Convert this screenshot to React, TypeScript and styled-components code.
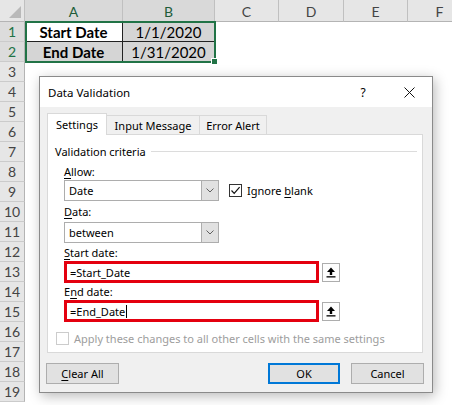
import React from 'react';
import styled, { createGlobalStyle, css } from 'styled-components';

const GlobalStyle = createGlobalStyle`
  html, body {
    margin: 0;
    padding: 0;
    background: #fff;
    overflow: hidden;
  }
`;

const COLUMNS = [
  { name: 'A', width: 98, selected: true },
  { name: 'B', width: 92, selected: true },
  { name: 'C', width: 64 },
  { name: 'D', width: 65 },
  { name: 'E', width: 64 },
  { name: 'F', width: 64 },
];

const ROW_COUNT = 19;

interface CellData {
  text: string;
  bold?: boolean;
  shaded?: boolean;
}

const DATA: Record<string, CellData> = {
  A1: { text: 'Start Date', bold: true },
  B1: { text: '1/1/2020', shaded: true },
  A2: { text: 'End Date', bold: true, shaded: true },
  B2: { text: '1/31/2020', shaded: true },
};

const Screen = styled.div`
  position: relative;
  width: 452px;
  height: 405px;
  overflow: hidden;
  background: #fff;
`;

/* ---------- spreadsheet ---------- */

const Sheet = styled.div`
  display: grid;
  grid-template-columns: 25px ${COLUMNS.map((c) => `${c.width}px`).join(' ')};
  grid-template-rows: 22px repeat(${ROW_COUNT}, 20px);
  font-family: Lato, 'Liberation Sans', sans-serif;
`;

const Corner = styled.div`
  grid-area: 1 / 1;
  position: relative;
  background: #e6e6e6;
  border-right: 1px solid #c0c0c0;
  border-bottom: 1px solid #b4b4b4;
  box-sizing: border-box;

  &::after {
    content: '';
    position: absolute;
    right: 3px;
    bottom: 3px;
    border-style: solid;
    border-width: 0 0 12px 12px;
    border-color: transparent transparent #b9b9b9 transparent;
  }
`;

const ColHeader = styled.div<{ $col: number; $selected?: boolean }>`
  grid-area: 1 / ${(p) => p.$col + 2};
  display: flex;
  align-items: center;
  justify-content: center;
  box-sizing: border-box;
  padding-top: 1px;
  font-size: 14px;
  color: ${(p) => (p.$selected ? '#215c3a' : '#444')};
  background: ${(p) => (p.$selected ? '#d9d9d9' : '#e6e6e6')};
  border-right: 1px solid #c0c0c0;
  border-bottom: 1px solid #b4b4b4;
`;

const RowHeader = styled.div<{ $row: number; $selected?: boolean }>`
  grid-area: ${(p) => p.$row + 1} / 1;
  display: flex;
  align-items: center;
  justify-content: center;
  box-sizing: border-box;
  font-size: 14px;
  color: ${(p) => (p.$selected ? '#217346' : '#444')};
  background: ${(p) => (p.$selected ? '#dcdcdc' : '#e6e6e6')};
  border-right: 1px solid #b4b4b4;
  border-bottom: 1px solid #cbcbcb;
`;

const Cell = styled.div<{ $row: number; $col: number; $bold?: boolean; $shaded?: boolean; $filled?: boolean }>`
  grid-area: ${(p) => p.$row + 1} / ${(p) => p.$col + 2};
  display: flex;
  align-items: center;
  justify-content: center;
  box-sizing: border-box;
  font-size: 15px;
  color: #000;
  font-weight: ${(p) => (p.$bold ? 700 : 400)};
  background: ${(p) => (p.$shaded ? '#d5d5d5' : '#fff')};
  ${(p) =>
    p.$filled &&
    css`
      border-right: 1px solid #222;
      border-bottom: 1px solid #222;
    `}
`;

const Selection = styled.div`
  grid-area: 2 / 2 / 4 / 4;
  position: relative;
  z-index: 1;
  margin: -1px -1px -1px 0;
  border: 2px solid #217346;
  pointer-events: none;
`;

const FillHandle = styled.div`
  position: absolute;
  right: -4px;
  bottom: -4px;
  width: 5px;
  height: 5px;
  background: #217346;
  border: 1px solid #fff;
`;

/* ---------- dialog ---------- */

const Dialog = styled.div`
  position: absolute;
  left: 39px;
  top: 76px;
  width: 394px;
  height: 317px;
  box-sizing: border-box;
  display: flex;
  flex-direction: column;
  border: 1px solid #8a8a8a;
  background: #f0f0f0;
  box-shadow: 2px 3px 12px rgba(0, 0, 0, 0.28);
  z-index: 2;
  font-family: 'Noto Sans', 'Open Sans', sans-serif;
  font-size: 11px;
  color: #000;
`;

const TitleBar = styled.div`
  height: 30px;
  flex: none;
  display: flex;
  align-items: center;
  justify-content: space-between;
  background: #fff;
`;

const Title = styled.span`
  padding-left: 8px;
  font-size: 11.5px;
`;

const TitleButtons = styled.div`
  display: flex;
  height: 100%;
`;

const TitleButton = styled.div`
  width: 46px;
  height: 100%;
  display: flex;
  align-items: center;
  justify-content: center;
  font-size: 12px;
`;

const Body = styled.div`
  flex: 1;
  display: flex;
  flex-direction: column;
  padding: 6px 9px 0 7px;
`;

const TabStrip = styled.div`
  display: flex;
  align-items: flex-end;
  height: 21px;
  position: relative;
  z-index: 1;
`;

const Tab = styled.div<{ $active?: boolean; $width: number }>`
  box-sizing: border-box;
  width: ${(p) => p.$width}px;
  display: flex;
  align-items: center;
  justify-content: center;
  border: 1px solid #d9d9d9;
  border-bottom: none;
  ${(p) =>
    p.$active
      ? css`
          height: 22px;
          margin-bottom: -1px;
          background: #fff;
          padding-bottom: 1px;
        `
      : css`
          height: 19px;
          background: #f0f0f0;
          margin-left: -1px;
        `}
`;

const Panel = styled.div`
  height: 219px;
  box-sizing: border-box;
  background: #fff;
  border: 1px solid #d9d9d9;
  padding: 8px 5px 0 7px;
  display: flex;
  flex-direction: column;
`;

const GroupHeader = styled.div`
  display: flex;
  align-items: center;
  gap: 5px;
  height: 16px;
`;

const GroupRule = styled.div`
  flex: 1;
  height: 1px;
  background: #dcdcdc;
`;

const Criteria = styled.div`
  display: flex;
  flex-direction: column;
  padding-left: 9px;
  margin-top: 5px;
`;

const FieldLabel = styled.div<{ $top?: number }>`
  height: 16px;
  line-height: 16px;
  margin-top: ${(p) => p.$top ?? 0}px;
`;

const FieldRow = styled.div<{ $top?: number }>`
  display: flex;
  align-items: center;
  margin-top: ${(p) => p.$top ?? 0}px;
`;

const SelectBox = styled.div`
  width: 155px;
  height: 21px;
  box-sizing: border-box;
  display: flex;
  align-items: stretch;
  border: 1px solid #adadad;
  background: #fff;
`;

const SelectValue = styled.span`
  flex: 1;
  display: flex;
  align-items: center;
  padding-left: 4px;
`;

const SelectButton = styled.span`
  width: 16px;
  display: flex;
  align-items: center;
  justify-content: center;
  background: #e1e1e1;
  border-left: 1px solid #adadad;
`;

const CheckLabel = styled.label<{ $disabled?: boolean; $indent?: number }>`
  display: flex;
  align-items: center;
  gap: 5px;
  margin-left: ${(p) => p.$indent ?? 0}px;
  color: ${(p) => (p.$disabled ? '#9d9d9d' : '#000')};
`;

const CheckBoxFrame = styled.span<{ $disabled?: boolean }>`
  width: 13px;
  height: 13px;
  box-sizing: border-box;
  display: flex;
  align-items: center;
  justify-content: center;
  background: #fff;
  border: 1px solid ${(p) => (p.$disabled ? '#cccccc' : '#333')};
`;

const RefInput = styled.div<{ $highlight?: boolean }>`
  width: 255px;
  height: 22px;
  box-sizing: border-box;
  display: flex;
  align-items: center;
  padding-left: 3px;
  background: #fff;
  border: ${(p) => (p.$highlight ? '3px solid #e4000f' : '1px solid #7a7a7a')};
`;

const Caret = styled.span`
  width: 1px;
  height: 13px;
  background: #000;
  margin-left: 1px;
`;

const RefButton = styled.span`
  width: 18px;
  height: 19px;
  margin-left: 3px;
  box-sizing: border-box;
  display: flex;
  align-items: center;
  justify-content: center;
  background: #fdfdfd;
  border: 1px solid #adadad;
`;

const ApplyRow = styled.div`
  margin-top: 9px;
  margin-left: 1px;
`;

const Footer = styled.div`
  display: flex;
  align-items: center;
  gap: 11px;
  margin-top: 10px;
  margin-right: -1px;
  margin-left: -1px;
`;

const Spacer = styled.div`
  flex: 1;
`;

const Button = styled.div<{ $default?: boolean; $width: number }>`
  width: ${(p) => p.$width}px;
  height: 21px;
  box-sizing: border-box;
  display: flex;
  align-items: center;
  justify-content: center;
  background: #e1e1e1;
  border: ${(p) => (p.$default ? '2px solid #0078d7' : '1px solid #adadad')};
`;

const Key = styled.span`
  text-decoration: underline;
  text-underline-offset: 2px;
`;

/* ---------- small drawings ---------- */

const Chevron = () => (
  <svg width="8" height="5" viewBox="0 0 8 5">
    <path d="M0.5 0.5 L4 4 L7.5 0.5" fill="none" stroke="#606060" strokeWidth="1" />
  </svg>
);

const Check = () => (
  <svg width="11" height="11" viewBox="0 0 11 11">
    <path d="M1.5 5.5 L4.2 8.3 L9.6 2.2" fill="none" stroke="#111" strokeWidth="1.2" />
  </svg>
);

const CloseGlyph = () => (
  <svg width="11" height="11" viewBox="0 0 11 11">
    <path d="M0.5 0.5 L10.5 10.5 M10.5 0.5 L0.5 10.5" stroke="#111" strokeWidth="1" />
  </svg>
);

const CollapseGlyph = () => (
  <svg width="10" height="11" viewBox="0 0 10 11">
    <path d="M5 0.5 L1 5 H3.8 V8 H6.2 V5 H9 Z" fill="#000" />
    <rect x="0.5" y="9.2" width="9" height="1.3" fill="#000" />
  </svg>
);

const Select = ({ value }: { value: string }) => (
  <SelectBox>
    <SelectValue>{value}</SelectValue>
    <SelectButton>
      <Chevron />
    </SelectButton>
  </SelectBox>
);

const Spreadsheet = () => (
  <Sheet>
    <Corner />
    {COLUMNS.map((c, i) => (
      <ColHeader key={c.name} $col={i} $selected={c.selected}>
        {c.name}
      </ColHeader>
    ))}
    {Array.from({ length: ROW_COUNT }, (_, r) => (
      <RowHeader key={r} $row={r + 1} $selected={r < 2}>
        {r + 1}
      </RowHeader>
    ))}
    {Array.from({ length: ROW_COUNT }, (_, r) =>
      COLUMNS.map((c, ci) => {
        const d = DATA[`${c.name}${r + 1}`];
        return (
          <Cell key={`${c.name}${r}`} $row={r + 1} $col={ci} $bold={d?.bold} $shaded={d?.shaded} $filled={!!d}>
            {d?.text}
          </Cell>
        );
      })
    )}
    <Selection>
      <FillHandle />
    </Selection>
  </Sheet>
);

const DataValidationDialog = () => (
  <Dialog>
    <TitleBar>
      <Title>Data Validation</Title>
      <TitleButtons>
        <TitleButton>?</TitleButton>
        <TitleButton>
          <CloseGlyph />
        </TitleButton>
      </TitleButtons>
    </TitleBar>
    <Body>
      <TabStrip>
        <Tab $active $width={60}>
          Settings
        </Tab>
        <Tab $width={94}>Input Message</Tab>
        <Tab $width={68}>Error Alert</Tab>
      </TabStrip>
      <Panel>
        <GroupHeader>
          <span>Validation criteria</span>
          <GroupRule />
        </GroupHeader>
        <Criteria>
          <FieldLabel>
            <Key>A</Key>llow:
          </FieldLabel>
          <FieldRow>
            <Select value="Date" />
            <CheckLabel $indent={10}>
              <CheckBoxFrame>
                <Check />
              </CheckBoxFrame>
              <span>
                Ignore <Key>b</Key>lank
              </span>
            </CheckLabel>
          </FieldRow>
          <FieldLabel $top={3}>
            <Key>D</Key>ata:
          </FieldLabel>
          <FieldRow $top={2}>
            <Select value="between" />
          </FieldRow>
          <FieldLabel $top={2}>
            <Key>S</Key>tart date:
          </FieldLabel>
          <FieldRow>
            <RefInput $highlight>=Start_Date</RefInput>
            <RefButton>
              <CollapseGlyph />
            </RefButton>
          </FieldRow>
          <FieldLabel $top={1}>
            E<Key>n</Key>d date:
          </FieldLabel>
          <FieldRow>
            <RefInput $highlight>
              =End_Date
              <Caret />
            </RefInput>
            <RefButton>
              <CollapseGlyph />
            </RefButton>
          </FieldRow>
        </Criteria>
        <ApplyRow>
          <CheckLabel $disabled>
            <CheckBoxFrame $disabled />
            <span>Apply these changes to all other cells with the same settings</span>
          </CheckLabel>
        </ApplyRow>
      </Panel>
      <Footer>
        <Button $width={73}>
          <span>
            <Key>C</Key>lear All
          </span>
        </Button>
        <Spacer />
        <Button $width={72} $default>
          OK
        </Button>
        <Button $width={73}>Cancel</Button>
      </Footer>
    </Body>
  </Dialog>
);

export default function App() {
  return (
    <>
      <GlobalStyle />
      <Screen>
        <Spreadsheet />
        <DataValidationDialog />
      </Screen>
    </>
  );
}
